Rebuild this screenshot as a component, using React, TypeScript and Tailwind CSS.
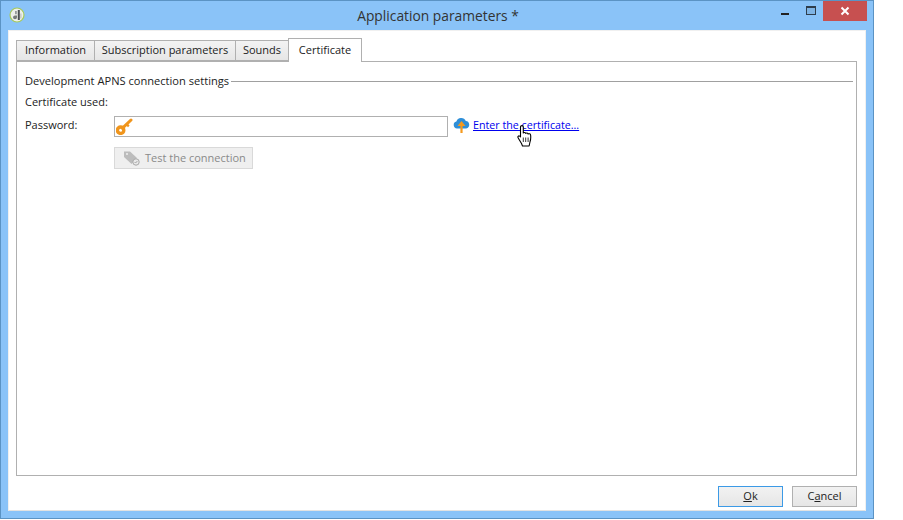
import React from 'react';

const font = { fontFamily: '"Open Sans", "Noto Sans", sans-serif' };

const AppIcon = () => (
  <svg width="16" height="16" viewBox="0 0 16 16">
    <circle cx="8" cy="8" r="7" fill="#eef0ea" stroke="#a6c95a" strokeWidth="1.2" />
    <path d="M4 10.200a2 2 0 1 0 4 0V8.400H6A2 2 0 0 0 4 10.200z" fill="#777b79" />
    <rect x="8.800" y="3" width="2" height="10" fill="#4c5052" />
    <rect x="6" y="4" width="1.800" height="3.200" fill="#979b99" />
    <rect x="11.400" y="6.500" width="1" height="5" fill="#b5b8b6" />
  </svg>
);

const KeyIcon = () => (
  <svg width="17" height="17" viewBox="0 0 17 17">
    <circle cx="4.600" cy="12.200" r="3.200" fill="none" stroke="#f0951c" strokeWidth="3.400" />
    <path d="M6.500 10.200L15 2" stroke="#f0951c" strokeWidth="3" strokeLinecap="round" />
    <path d="M10.800 6.400l2 2" stroke="#f0951c" strokeWidth="2.200" />
  </svg>
);

const TagIcon = () => (
  <svg width="18" height="16" viewBox="0 0 18 16">
    <path d="M1 1.500h6l7 6.500-5.500 6L1 7z" fill="#bcbcbc" />
    <circle cx="4" cy="4" r="1" fill="#efefef" />
    <circle cx="13" cy="12" r="3.200" fill="#e9e9e9" stroke="#a8a8a8" />
    <path d="M11.600 12l1 1 1.800-2" fill="none" stroke="#a8a8a8" />
  </svg>
);

const CloudIcon = () => (
  <svg width="17" height="16" viewBox="0 0 17 16">
    <path d="M4 11.500a3.500 3.500 0 0 1-.6-6.900 5 5 0 0 1 9.400-.6 3.800 3.800 0 0 1 .4 7.500H4z" fill="#2f8fd8" />
    <path d="M8.500 16V8" stroke="#f59a1e" strokeWidth="2.200" />
    <path d="M4.500 9L8.500 4l4 5z" fill="#f59a1e" />
  </svg>
);

const HandCursor = () => (
  <svg width="16" height="23" viewBox="0 0 16 23" className="absolute left-[517px] top-[125px]">
    <path
      d="M3.500 2c0-1.800 2.800-1.800 2.800 0v6c.7-.8 2.100-.6 2.400.4.700-.7 2.100-.5 2.400.6.800-.6 2.300-.2 2.500 1 .3 2.200.1 4.500-.5 6.500l-1 4.500H5.500l-1-2.500L1.200 13c-.9-1.200.3-2.700 1.500-1.900l.8.700z"
      fill="#fff"
      stroke="#000"
      strokeWidth="1.100"
      strokeLinejoin="round"
    />
    <path d="M6.300 12.500v4.500M8.700 12.500v4.500M11.100 12.500v4.500" stroke="#000" strokeWidth="0.800" />
  </svg>
);

const tabs = [
  { label: 'Information', width: 'w-[79px]' },
  { label: 'Subscription parameters', width: 'w-[142px]' },
  { label: 'Sounds', width: 'w-[54px]' },
];

export default function App() {
  return (
    <div className="relative w-[903px] h-[520px] bg-white text-[11px] text-[#222]" style={font}>
      <div className="w-[874px] h-[519px] bg-[#8ac3f8] border border-[#5b93c4] flex flex-col">
        {/* Title bar */}
        <div className="h-[29px] flex items-center relative shrink-0">
          <div className="w-[16px] ml-[8px] mb-[1px]">
            <AppIcon />
          </div>
          <div className="flex-1 text-center text-[13.8px] text-[#333] pt-[1px]">Application parameters *</div>
          <div className="w-[16px] mr-[6px]" />
          <div className="absolute right-[6px] top-0 flex items-start h-[20px]">
            <div className="w-[8px] h-[2px] bg-[#222] mt-[12px] mr-[17px]" />
            <div className="w-[10px] h-[9px] mt-[5px] mr-[7px] border border-[#2e3d4c] border-t-[2px] bg-[#7fb4e4]" />
            <div className="w-[44px] h-[20px] bg-[#c75050] flex items-center justify-center">
              <svg width="10" height="10" viewBox="0 0 10 10">
                <path d="M1.500 1.500l7 7M8.500 1.500l-7 7" stroke="#fff" strokeWidth="2" />
              </svg>
            </div>
          </div>
        </div>

        {/* Client area */}
        <div className="mx-[7px] h-[481px] bg-white border border-[#f0f0f0] border-b-[#e2e2e2] px-[7px] pt-[7px] flex flex-col">
          <div className="flex h-[23px] shrink-0 relative z-10 items-end">
            {tabs.map((t) => (
              <div
                key={t.label}
                className={`${t.width} h-[21px] bg-gradient-to-b from-[#f3f3f3] to-[#e6e6e6] border border-[#b0b0b0] -mr-px flex items-center justify-center`}
              >
                {t.label}
              </div>
            ))}
            <div className="w-[74px] h-[24px] -mb-px bg-white border border-b-0 border-[#b0b0b0] flex items-center justify-center pb-[1px]">
              Certificate
            </div>
          </div>

          <div className="w-[841px] h-[415px] border border-[#b0b0b0] shrink-0 pl-[8px] pr-[3px] pt-[11px]">
            <div className="flex items-center gap-[2px] h-[16px]">
              <span className="text-[11.1px]">Development APNS connection settings</span>
              <div className="flex-1 h-px bg-[#a0a0a0]" />
            </div>
            <div className="h-[16px] mt-[5px] flex items-center">Certificate used:</div>
            <div className="flex items-center mt-[5px] h-[22px]">
              <span className="w-[89px] pb-[2px]">Password:</span>
              <div className="w-[334px] h-[21px] border border-[#b0b0b0] flex items-center pl-[1px]">
                <KeyIcon />
              </div>
              <div className="ml-[5px] flex items-center gap-[3px] pb-[1px]">
                <CloudIcon />
                <span className="text-[10.7px] text-[#0000ee] underline">Enter the certificate...</span>
              </div>
            </div>
            <div className="ml-[89px] mt-[10px] w-[139px] h-[22px] bg-[#efefef] border border-[#d9d9d9] flex items-center pl-[8px] gap-[4px] text-[#8a8a8a]">
              <TagIcon />
              <span>Test the connection</span>
            </div>
          </div>

          <div className="flex justify-end gap-[9px] pt-[10px] pr-[1px]">
            <div className="w-[65px] h-[21px] bg-gradient-to-b from-[#f2f2f2] to-[#e6e6e6] border border-[#3c9ae6] flex items-center justify-center">
              <span><u>O</u>k</span>
            </div>
            <div className="w-[65px] h-[21px] bg-gradient-to-b from-[#f2f2f2] to-[#e6e6e6] border border-[#b0b0b0] flex items-center justify-center">
              <span>C<u>a</u>ncel</span>
            </div>
          </div>
        </div>
      </div>
      <HandCursor />
    </div>
  );
}
